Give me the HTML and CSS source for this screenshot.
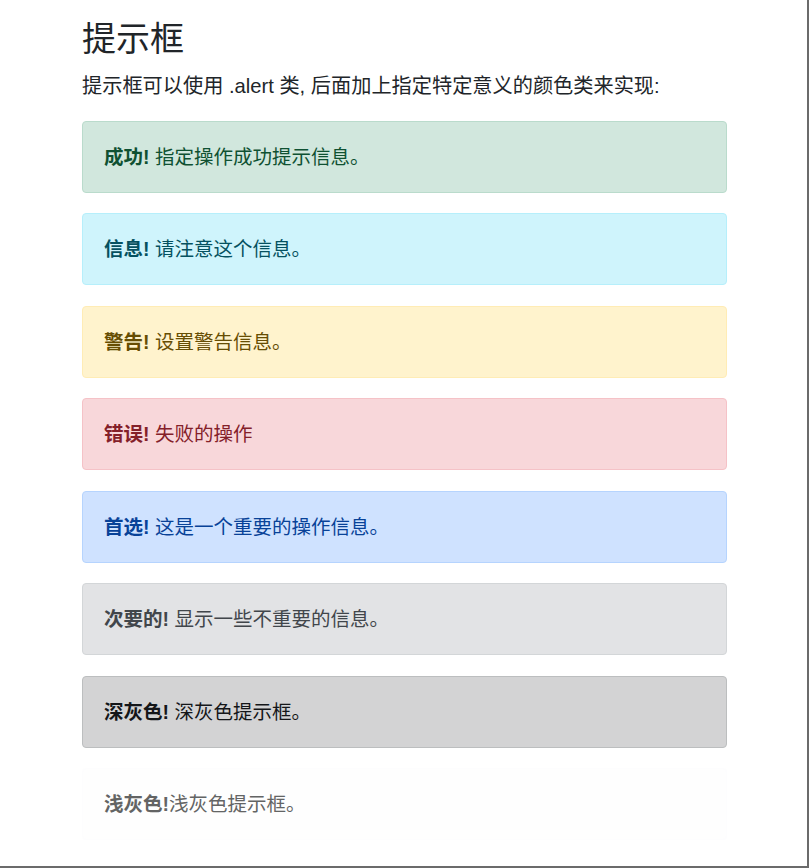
FILE: index.html
```html
<!DOCTYPE html>
<html lang="zh">
<head>
<meta charset="utf-8">
<title>提示框</title>
<link rel="stylesheet" href="styles.css">
</head>
<body>
<div class="frame">
  <div class="container">
    <h2 class="title">提示框</h2>
    <p class="lead">提示框可以使用 .alert 类, 后面加上指定特定意义的颜色类来实现:</p>
    <div class="alert alert-success"><strong>成功!</strong> 指定操作成功提示信息。</div>
    <div class="alert alert-info"><strong>信息!</strong> 请注意这个信息。</div>
    <div class="alert alert-warning"><strong>警告!</strong> 设置警告信息。</div>
    <div class="alert alert-danger"><strong>错误!</strong> 失败的操作</div>
    <div class="alert alert-primary"><strong>首选!</strong> 这是一个重要的操作信息。</div>
    <div class="alert alert-secondary"><strong>次要的!</strong> 显示一些不重要的信息。</div>
    <div class="alert alert-dark"><strong>深灰色!</strong> 深灰色提示框。</div>
    <div class="alert alert-light"><strong>浅灰色!</strong>浅灰色提示框。</div>
  </div>
</div>
</body>
</html>
```

FILE: styles.css
```css
html, body {
  margin: 0;
  padding: 0;
  background: #fff;
}
body {
  font-family: "Liberation Sans", "Noto Sans CJK SC", sans-serif;
  font-size: 19.5px;
  color: #212529;
}
.frame {
  width: 809px;
  height: 868px;
  box-sizing: border-box;
  border-right: 2px solid #6b6b6b;
  border-bottom: 2px solid #6b6b6b;
  overflow: hidden;
}
.container {
  width: 645px;
  margin-left: 82px;
  padding-top: 20px;
}
.title {
  margin: 0 0 15px;
  font-size: 34px;
  line-height: 38px;
  font-weight: 400;
}
.lead {
  margin: 0 0 21px;
  font-size: 20.2px;
  line-height: 27px;
}
.alert {
  box-sizing: border-box;
  height: 72px;
  padding: 20px 21px;
  line-height: 30px;
  border: 1px solid transparent;
  border-radius: 4px;
  margin-bottom: 20.43px;
}
.alert strong { font-weight: 700; }
.alert-success { background: #d1e7dd; border-color: #badbcc; color: #0f5132; }
.alert-info { background: #cff4fc; border-color: #b6effb; color: #055160; }
.alert-warning { background: #fff3cd; border-color: #ffecb5; color: #664d03; }
.alert-danger { background: #f8d7da; border-color: #f5c2c7; color: #842029; }
.alert-primary { background: #cfe2ff; border-color: #b6d4fe; color: #084298; }
.alert-secondary { background: #e2e3e5; border-color: #d3d6d8; color: #41464b; }
.alert-dark { background: #d3d3d4; border-color: #bcbebf; color: #141619; }
.alert-light { background: #fefefe; border-color: #fdfdfe; color: #636464; }
```
